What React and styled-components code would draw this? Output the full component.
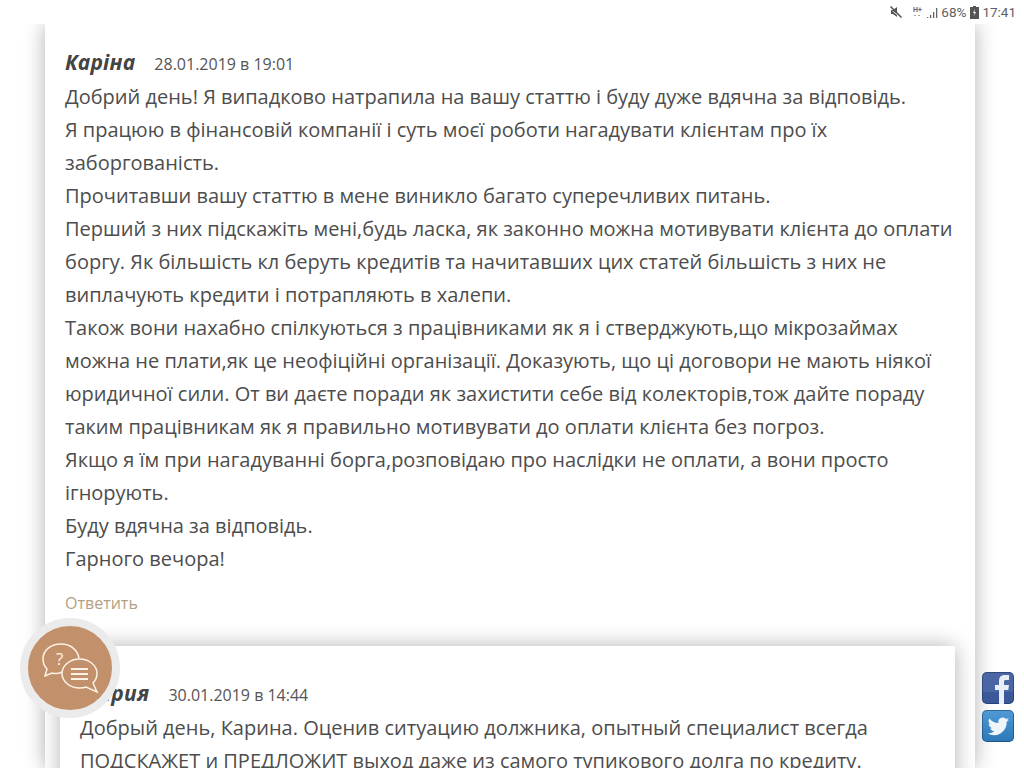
import React from 'react';
import styled, { createGlobalStyle } from 'styled-components';

const GlobalStyle = createGlobalStyle`
  html, body {
    margin: 0;
    padding: 0;
    height: 768px;
    overflow: hidden;
    background: #fff;
    font-family: "Open Sans", "Noto Sans", sans-serif;
    color: #444;
  }
`;

const Page = styled.div`
  position: relative;
  width: 1024px;
  height: 768px;
  overflow: hidden;
`;

const StatusBar = styled.div`
  height: 24px;
  display: flex;
  align-items: center;
  justify-content: flex-end;
  padding-right: 8px;
  background: #fff;
  font-family: "Roboto", sans-serif;
  font-size: 13.5px;
  color: #5f5f5f;
  position: relative;
  z-index: 2;
`;

const StatusIcon = styled.svg`
  display: block;
  margin-right: ${p => p.$gap || 3}px;
`;

const StatusText = styled.span`
  margin-right: ${p => p.$gap || 0}px;
`;

const Card = styled.div`
  width: 930px;
  height: 744px;
  margin-left: 45px;
  box-sizing: border-box;
  padding: 24px 20px 0;
  background: #fff;
  box-shadow: 0 0 20px rgba(0, 0, 0, 0.3);
`;

const Header = styled.div`
  display: flex;
  align-items: baseline;
  height: 32px;
`;

const Author = styled.span`
  font-weight: 700;
  font-style: italic;
  font-size: 21px;
  letter-spacing: 0.2px;
  color: #444;
  margin-right: 19px;
`;

const Time = styled.span`
  font-size: 16px;
  color: #555;
`;

const Body = styled.div`
  font-size: 20px;
  line-height: 33px;
  color: #4d4d4d;
`;

const Reply = styled.a`
  display: block;
  margin-top: 17px;
  font-size: 16px;
  line-height: 22px;
  color: #b3a084;
`;

const Nested = styled.div`
  margin: 32px 0 0 -5px;
  width: 895px;
  height: 200px;
  box-sizing: border-box;
  padding: 33px 20px 0;
  background: #fff;
  box-shadow: 0 0 20px rgba(0, 0, 0, 0.3);
`;

const ChatBubble = styled.div`
  position: absolute;
  left: 20px;
  top: 618px;
  width: 84px;
  height: 84px;
  border: 8px solid #ebebeb;
  border-radius: 50%;
  background: #c2906a;
`;

const ChatIcon = styled.svg`
  display: block;
`;

const SocialRail = styled.div`
  position: absolute;
  left: 982px;
  top: 672px;
  display: flex;
  flex-direction: column;
  gap: 6px;
`;

const SocialButton = styled.div`
  width: 32px;
  height: 32px;
  border-radius: 5px;
  overflow: hidden;
  background: ${p => p.$bg};
  box-shadow: inset 0 0 0 1px rgba(20, 40, 80, 0.45);
`;

const Social = styled.svg`
  display: block;
`;

export default function App() {
  return (
    <Page>
      <GlobalStyle />
      <StatusBar>
        <StatusIcon $gap={10} width="14" height="14" viewBox="0 0 14 14">
          <path d="M2 5h2l4-3v6.500M2 5v4h2l4 3v-2" fill="#555" />
          <path d="M1.500 1.500l11 11" stroke="#555" strokeWidth="1.600" />
        </StatusIcon>
        <StatusIcon $gap={3} width="25" height="14" viewBox="0 0 25 14">
          <text x="0" y="7" fontSize="7" fontWeight="700" fontFamily="Roboto" fill="#666">H+</text>
          <path d="M1 10h2v1H1zM5 10h2v1H5z" fill="#aaa" />
          <path d="M14 12h1.300v1H14zM17 10h1.300v3H17zM20 7h1.300v6H20zM23 3h1.300v10H23z" fill="#666" />
        </StatusIcon>
        <StatusText $gap={4}>68%</StatusText>
        <StatusIcon $gap={3} width="9" height="14" viewBox="0 0 9 14">
          <path d="M3 1h3v1h3v12H0V2h3z" fill="#555" />
          <path d="M5 4L3 8h1.600L4 11l2-4H4.400z" fill="#fff" />
        </StatusIcon>
        <StatusText>17:41</StatusText>
      </StatusBar>
      <Card>
        <Header>
          <Author>Каріна</Author>
          <Time>28.01.2019 в 19:01</Time>
        </Header>
        <Body>
          Добрий день! Я випадково натрапила на вашу статтю і буду дуже вдячна за відповідь.<br />
          Я працюю в фінансовій компанії і суть моєї роботи нагадувати клієнтам про їх<br />
          заборгованість.<br />
          Прочитавши вашу статтю в мене виникло багато суперечливих питань.<br />
          Перший з них підскажіть мені,будь ласка, як законно можна мотивувати клієнта до оплати<br />
          боргу. Як більшість кл беруть кредитів та начитавших цих статей більшість з них не<br />
          виплачують кредити і потрапляють в халепи.<br />
          Також вони нахабно спілкуються з працівниками як я і стверджують,що мікрозаймах<br />
          можна не плати,як це неофіційні організації. Доказують, що ці договори не мають ніякої<br />
          юридичної сили. От ви даєте поради як захистити себе від колекторів,тож дайте пораду<br />
          таким працівникам як я правильно мотивувати до оплати клієнта без погроз.<br />
          Якщо я їм при нагадуванні борга,розповідаю про наслідки не оплати, а вони просто<br />
          ігнорують.<br />
          Буду вдячна за відповідь.<br />
          Гарного вечора!
        </Body>
        <Reply>Ответить</Reply>
        <Nested>
          <Header>
            <Author>Мария</Author>
            <Time>30.01.2019 в 14:44</Time>
          </Header>
          <Body>
            Добрый день, Карина. Оценив ситуацию должника, опытный специалист всегда<br />
            ПОДСКАЖЕТ и ПРЕДЛОЖИТ выход даже из самого тупикового долга по кредиту.
          </Body>
        </Nested>
      </Card>
      <ChatBubble>
        <ChatIcon width="84" height="84" viewBox="0 0 84 84" fill="none" stroke="#fdf2e4" strokeWidth="1.500">
          <path d="M34 46C30 48 27 48 24 47L17 50L19 43C16 40 15 37 15 33C15 24 23 18 33 18C42 18 49 23 51 32" />
          <path d="M51.500 33C61 33 69 39.500 69 47.500C69 51 68 54 65 57L69 66L58 61C56 62 54 62 51.500 62C42 62 34 55.500 34 47.500C34 39.500 42 33 51.500 33Z" />
          <path d="M43 43H60M43 48H60M43 53H60" strokeWidth="2" />
          <text x="28" y="39" fontSize="17" fontFamily="Open Sans" fill="#fdf2e4" stroke="none">?</text>
        </ChatIcon>
      </ChatBubble>
      <SocialRail>
        <SocialButton $bg="linear-gradient(#4a66a4 0 62%, #3b5998 62% 100%)">
          <Social width="32" height="32" viewBox="0 0 32 32">
            <path d="M17 32V18h-4v-5h4v-4c0-4 2-6 6-6h4v5h-3c-1.500 0-2 .6-2 2v3h5l-.7 5H22v14z" fill="#e9eef7" />
          </Social>
        </SocialButton>
        <SocialButton $bg="linear-gradient(#4f9ad6, #2c78b8)">
          <Social width="32" height="32" viewBox="0 0 24 24">
            <path d="M20.500 7.200c-.6.300-1.200.4-1.900.5.700-.4 1.200-1 1.400-1.800-.6.400-1.300.7-2.100.8A3.300 3.300 0 0 0 12.300 9.700 9.400 9.400 0 0 1 5.500 6.300a3.300 3.300 0 0 0 1 4.400c-.5 0-1-.2-1.500-.4 0 1.600 1.100 3 2.700 3.300-.5.100-1 .1-1.500 0 .4 1.300 1.600 2.200 3.100 2.300A6.600 6.600 0 0 1 4 17.300a9.400 9.400 0 0 0 14.500-8.400c.7-.4 1.300-1 2-1.700z" fill="#eef6fc" />
          </Social>
        </SocialButton>
      </SocialRail>
    </Page>
  );
}
